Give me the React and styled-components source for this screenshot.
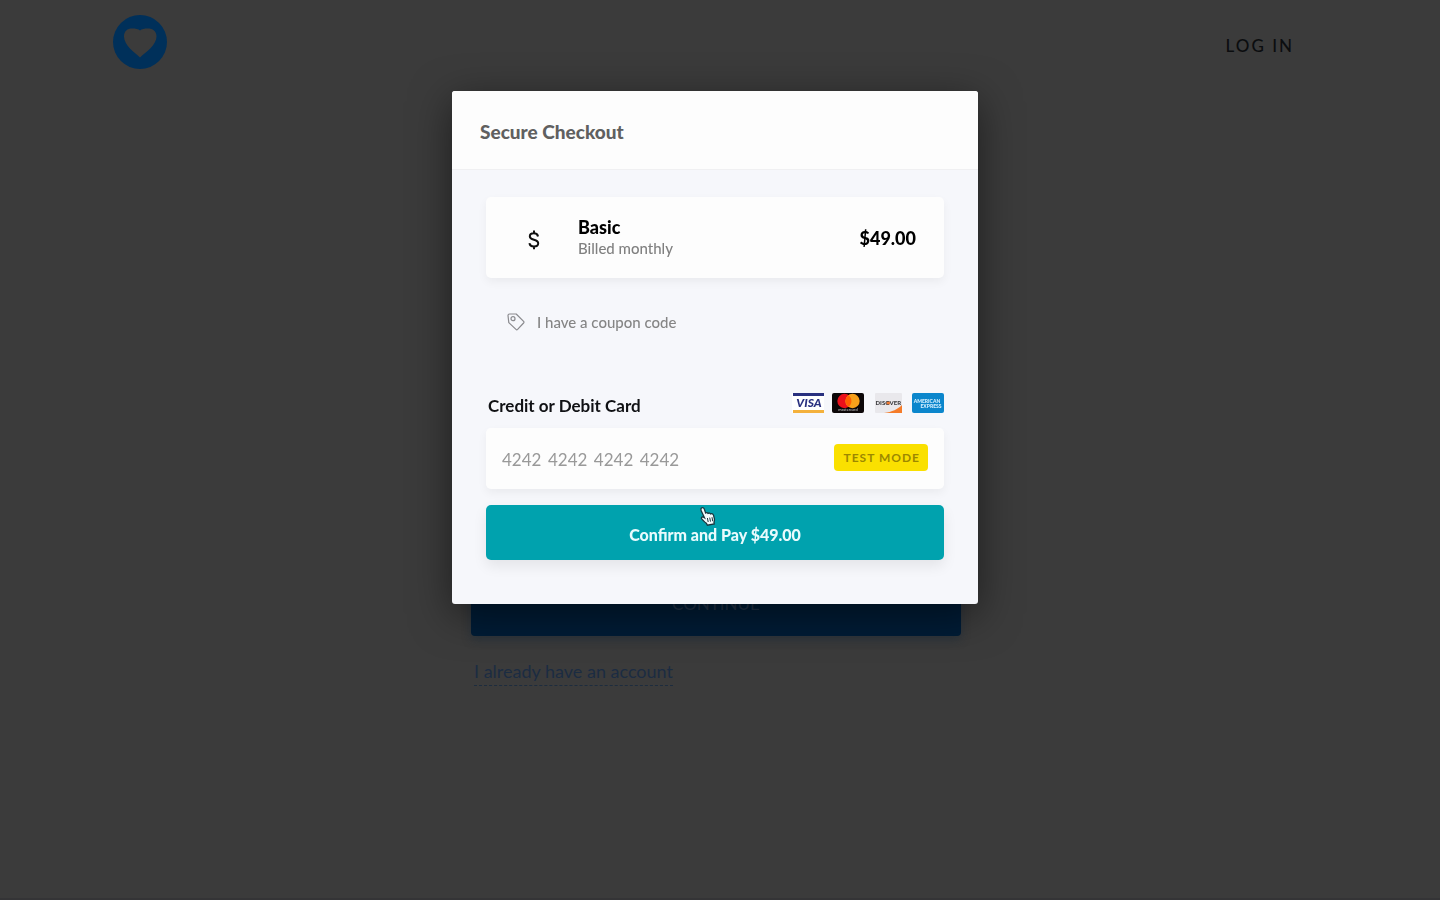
// NPM
import React, { Component } from "react";
import styled, { createGlobalStyle } from "styled-components";

// STYLES
const GlobalStyle = createGlobalStyle`
  *, *::before, *::after {
    box-sizing: border-box;
  }

  body {
    margin: 0;
    background: #3b3b3b;
    font-family: Lato, "Liberation Sans", sans-serif;
    font-size: 16px;
    line-height: 20px;
  }

  h2, h3, p {
    margin: 0;
  }

  button, input {
    font-family: inherit;
  }
`;

const Page = styled.div`
  display: flex;
  flex-direction: column;
  min-height: 100vh;
  border-bottom: 2px solid #343436;
`;

const TopBar = styled.header`
  display: flex;
  align-items: center;
  justify-content: space-between;
  padding: 14px 146px 0 112px;
`;

const LogoLink = styled.a`
  display: block;
  height: 56px;
`;

const LoginLink = styled.a`
  padding-top: 8px;
  color: #0b0d0f;
  font-size: 17px;
  font-weight: 500;
  letter-spacing: 2px;
  text-decoration: none;
`;

const SignUp = styled.main`
  display: flex;
  flex-direction: column;
  align-items: flex-start;
  align-self: center;
  width: 490px;
  max-width: 100%;
  margin: 500px 8px 0 0;
`;

const ContinueButton = styled.button`
  width: 100%;
  height: 66px;
  border: 0;
  border-radius: 4px;
  color: #23344a;
  background: #001c36;
  font-size: 17px;
  box-shadow: 0 4px 10px rgba(20, 40, 60, 0.4);
`;

const AccountLink = styled.a`
  margin: 25px 0 0 3px;
  padding-bottom: 4px;
  border-bottom: 1px dashed #1d2c3e;
  color: #1b2c42;
  font-size: 18px;
  text-decoration: none;
`;

const Overlay = styled.div`
  position: fixed;
  inset: 0;
  display: flex;
  align-items: flex-start;
  justify-content: center;
  padding: 91px 10px 0 0;
  overflow: auto;
`;

const Modal = styled.section`
  width: 526px;
  max-width: 100%;
  border-radius: 3px;
  overflow: hidden;
  background: #f6f7fb;
  box-shadow: 0 10px 40px rgba(0, 0, 0, 0.5);
`;

const ModalHeader = styled.header`
  padding: 31px 28px 27px;
  border-bottom: 1px solid #f0f0f2;
  background: #fdfdfd;
`;

const ModalTitle = styled.h2`
  color: #606060;
  font-size: 19px;
  font-weight: 900;
  line-height: 20px;
`;

const ModalBody = styled.form`
  display: flex;
  flex-direction: column;
  padding: 27px 34px 44px;
`;

const Card = styled.div`
  display: flex;
  align-items: center;
  border-radius: 5px;
  background: #fdfdfd;
  box-shadow: 0 4px 10px rgba(0, 0, 0, 0.05);
`;

const PlanCard = styled(Card)`
  height: 81px;
  padding: 0 28px 0 38px;
`;

const PlanIcon = styled.div`
  display: flex;
  width: 54px;
  padding-top: 4px;
`;

const PlanInfo = styled.div`
  flex: 1;
`;

const PlanName = styled.h3`
  color: #000;
  font-size: 18px;
  font-weight: 900;
  line-height: 21px;
`;

const PlanPeriod = styled.p`
  color: #808080;
  font-size: 15px;
  font-weight: 500;
`;

const PlanPrice = styled.strong`
  color: #000;
  font-size: 18px;
  font-weight: 900;
`;

const CouponButton = styled.button`
  display: flex;
  align-items: center;
  align-self: flex-start;
  gap: 12px;
  margin: 34px 0 0 21px;
  padding: 0;
  border: 0;
  color: #858585;
  background: none;
  font-size: 15px;
  font-weight: 500;
  line-height: 20px;
`;

const CardHeading = styled.div`
  display: flex;
  align-items: center;
  justify-content: space-between;
  margin: 60px 0 10px;
  height: 26px;
`;

const CardLabel = styled.label`
  padding: 2px 0 0 2px;
  color: #101114;
  font-size: 17px;
  font-weight: 700;
`;

const CardBrands = styled.div`
  display: flex;
  gap: 8px;
  padding-bottom: 4px;
`;

const CardField = styled(Card)`
  height: 61px;
  padding: 0 16px;
`;

const CardInput = styled.input`
  flex: 1;
  min-width: 0;
  padding: 2px 0 0;
  border: 0;
  outline: 0;
  color: #333;
  background: none;
  font-size: 17px;

  &::placeholder {
    color: #999;
    opacity: 1;
  }
`;

const TestBadge = styled.span`
  margin-bottom: 2px;
  padding: 4px 8px 3px 10px;
  border-radius: 4px;
  color: #9c8800;
  background: #fae000;
  font-size: 12px;
  font-weight: 700;
  letter-spacing: 1px;
`;

const PayButton = styled.button`
  position: relative;
  height: 55px;
  margin-top: 16px;
  padding: 3px 0 0;
  border: 0;
  border-radius: 5px;
  color: #e9fbfd;
  background: #00a2ae;
  font-size: 16px;
  font-weight: 900;
  cursor: pointer;
  box-shadow: 0 6px 14px rgba(0, 0, 0, 0.08);
`;

const Pointer = styled.svg`
  position: absolute;
  top: 1px;
  left: 213px;
`;

// ICONS
const HeartLogo = () => (
  <svg width="56" height="56" viewBox="0 0 56 56" aria-hidden="true">
    <circle cx="28" cy="28" r="27" fill="#00305a" />
    <path
      d="M28 43.5C22 38 12 31 12 22.500C12 17 15.500 14.500 20 14.500C23.500 14.500 26.500 15 28 16.500C29.500 15 32.500 14.500 36 14.500C40.500 14.500 44.500 17 44.500 22.500C44.500 31 34 38 28 43.500z"
      fill="#3b3b3b"
    />
  </svg>
);

const DollarIcon = () => (
  <svg width="20" height="22" viewBox="0 0 20 22" fill="none" stroke="#111" strokeWidth="2" aria-hidden="true">
    <path d="M14 7.5C13.7 5.3 12 4.3 9.8 4.3 7.3 4.3 5.8 5.5 5.8 7.3c0 4.6 8.4 2.3 8.4 7 0 2-1.7 3.2-4.2 3.2-2.6 0-4.3-1.2-4.5-3.4M10 1.5v3M10 17.2v3" />
  </svg>
);

const TagIcon = () => (
  <svg width="18" height="18" viewBox="0 0 18 18" fill="none" stroke="#8a8a8e" strokeWidth="1.2" strokeLinejoin="round" aria-hidden="true">
    <path d="M1 2.5Q1 1 2.5 1H9.2L16.6 8.4Q17.3 9.2 16.6 10L10.6 16.4Q9.8 17.2 9 16.4L1.8 9.6z" />
    <circle cx="6" cy="5.7" r="2" />
  </svg>
);

const VisaLogo = () => (
  <svg width="32" height="20" viewBox="0 0 32 20" role="img" aria-label="Visa">
    <rect width="32" height="20" rx="1" fill="#fff" />
    <rect x="1" width="31" height="3" fill="#29307f" />
    <rect x="1" y="17" width="31" height="3" fill="#f4b13c" />
    <text x="17" y="14" textAnchor="middle" fontFamily="Lato" fontSize="12" fontWeight="900" fontStyle="italic" fill="#29307f">
      VISA
    </text>
  </svg>
);

const MastercardLogo = () => (
  <svg width="32" height="20" viewBox="0 0 32 20" role="img" aria-label="Mastercard">
    <rect width="32" height="20" rx="2" fill="#0c0708" />
    <circle cx="12.5" cy="8" r="7.2" fill="#eb101b" />
    <circle cx="20.5" cy="8" r="7.2" fill="#f7a01a" />
    <path d="M16.5 2.2a7.200 7.200 0 0 1 0 11.600 7.200 7.200 0 0 1 0-11.600z" fill="#ff5f00" />
    <text x="16" y="18.4" textAnchor="middle" fontFamily="Lato" fontSize="4" fill="#ccc">
      mastercard
    </text>
  </svg>
);

const DiscoverLogo = () => (
  <svg width="32" height="20" viewBox="0 0 32 20" role="img" aria-label="Discover">
    <rect x="3" width="27" height="20" rx="1" fill="#e9e8ec" />
    <path d="M30 12v8H12c8-1 14-4 18-8z" fill="#f57c2a" />
    <circle cx="16.2" cy="10" r="2" fill="#ee7a35" />
    <text x="3.5" y="12.2" fontFamily="Lato" fontSize="6" fontWeight="900" fill="#3d3d40">
      DISC
    </text>
    <text x="17.5" y="12.2" fontFamily="Lato" fontSize="6" fontWeight="900" fill="#3d3d40">
      VER
    </text>
  </svg>
);

const AmexLogo = () => (
  <svg width="32" height="20" viewBox="0 0 32 20" role="img" aria-label="American Express">
    <rect width="32" height="20" rx="2" fill="#0b86cc" />
    <text x="15" y="9.5" textAnchor="middle" fontFamily="Lato" fontSize="5" fontWeight="900" fill="#d5f0ff">
      AMERICAN
    </text>
    <text x="19" y="14.5" textAnchor="middle" fontFamily="Lato" fontSize="5" fontWeight="900" fill="#d5f0ff">
      EXPRESS
    </text>
  </svg>
);

const HandPointer = () => (
  <Pointer width="17" height="20" viewBox="0 0 17 20" aria-hidden="true">
    <path
      d="M2.2 2.2C3.6.9 5 2 5.4 3.4L6.6 7c1-.7 2-.4 2.4.4 1-.7 2.2-.4 2.6.5 1.3-.6 2.5 0 2.9 1.2l.9 3.7c.3 1.3-.2 2.4-.4 3.6l.2 1.6-6.8 1.2-.9-1.8c-1.8-.9-3.2-2.7-4.8-4.5-.9-1.2.3-2.4 1.8-1.7l1 .6L2.2 4.8c-.3-1-.5-1.9 0-2.6z"
      fill="#f3fbfc"
      stroke="#17363e"
      strokeWidth="1.3"
    />
    <path d="M8.4 12l.8 4M10.7 11.6l.8 4M13 11.2l.7 4" stroke="#17363e" />
  </Pointer>
);

// MODULE
export default class CheckoutScene extends Component {
  constructor(props) {
    super(props);
    this.state = { cardNumber: "" };

    this.onSubmit = this.onSubmit.bind(this);
    this.onCardChange = this.onCardChange.bind(this);
  }

  onSubmit(ev) {
    ev.preventDefault();
  }

  onCardChange(ev) {
    this.setState({ cardNumber: ev.target.value });
  }

  render() {
    return (
      <>
        <GlobalStyle />
        <Page>
          <TopBar>
            <LogoLink href="#home" aria-label="Home">
              <HeartLogo />
            </LogoLink>
            <LoginLink href="#login">LOG IN</LoginLink>
          </TopBar>
          <SignUp>
            <ContinueButton type="button">CONTINUE</ContinueButton>
            <AccountLink href="#account">I already have an account</AccountLink>
          </SignUp>
        </Page>
        <Overlay>
          <Modal role="dialog" aria-labelledby="checkout-title">
            <ModalHeader>
              <ModalTitle id="checkout-title">Secure Checkout</ModalTitle>
            </ModalHeader>
            <ModalBody onSubmit={this.onSubmit}>
              <PlanCard>
                <PlanIcon>
                  <DollarIcon />
                </PlanIcon>
                <PlanInfo>
                  <PlanName>Basic</PlanName>
                  <PlanPeriod>Billed monthly</PlanPeriod>
                </PlanInfo>
                <PlanPrice>$49.00</PlanPrice>
              </PlanCard>
              <CouponButton type="button">
                <TagIcon />
                I have a coupon code
              </CouponButton>
              <CardHeading>
                <CardLabel htmlFor="card-number">Credit or Debit Card</CardLabel>
                <CardBrands>
                  <VisaLogo />
                  <MastercardLogo />
                  <DiscoverLogo />
                  <AmexLogo />
                </CardBrands>
              </CardHeading>
              <CardField>
                <CardInput
                  id="card-number"
                  placeholder={["4242", "4242", "4242", "4242"].join(" \u2009")}
                  value={this.state.cardNumber}
                  onChange={this.onCardChange}
                />
                <TestBadge>TEST MODE</TestBadge>
              </CardField>
              <PayButton type="submit">
                Confirm and Pay $49.00
                <HandPointer />
              </PayButton>
            </ModalBody>
          </Modal>
        </Overlay>
      </>
    );
  }
}
